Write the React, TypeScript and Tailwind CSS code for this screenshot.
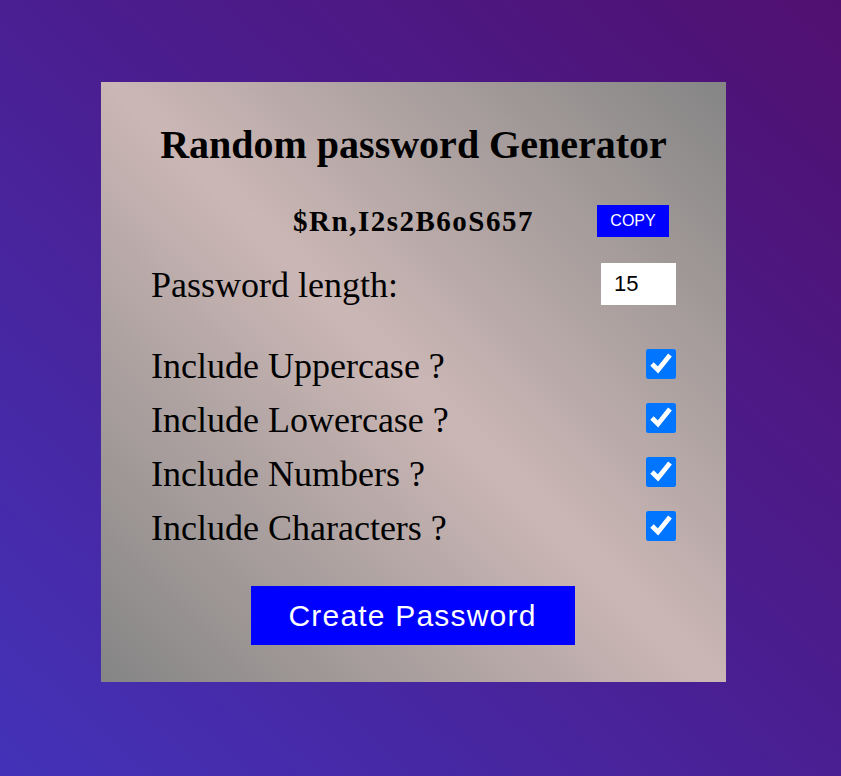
import React from 'react'

const options = [
    'Include Uppercase ?',
    'Include Lowercase ?',
    'Include Numbers ?',
    'Include Characters ?',
]

const App = () => {
    return (
        <div className='min-h-screen w-full pt-[82px] pl-[101px] bg-[linear-gradient(to_top_right,#4332b8,#4a1f92_50%,#501070)]'>

            <div className="w-[625px] h-[600px] pt-[40px] px-[50px] flex flex-col text-black font-['Liberation_Serif',serif] bg-[linear-gradient(45deg,#858585,#cbb7b5_50%,#858585)]">

                <h1 className='text-center text-[40px] leading-[46px] font-bold'>
                    Random password Generator
                </h1>

                <div className='grid grid-cols-[1fr_auto_1fr] items-center mt-[37px] h-[32px]'>
                    <div />
                    <span className='text-[29px] leading-[32px] font-bold tracking-[1.5px]'>
                        $Rn,I2s2B6oS657
                    </span>
                    <button className="justify-self-end mr-[7px] w-[72px] h-[32px] bg-[#0000ff] text-white text-[16px] font-['Liberation_Sans',sans-serif]">
                        COPY
                    </button>
                </div>

                <div className='flex justify-between items-center mt-[26px] h-[42px]'>
                    <label className='text-[36px] leading-[42px] pt-[2px]'>Password length:</label>
                    <input
                        type='number'
                        defaultValue={15}
                        className="w-[75px] h-[42px] bg-white pl-[13px] text-[22px] outline-none font-['Liberation_Sans',sans-serif] [appearance:textfield] [&::-webkit-inner-spin-button]:appearance-none"
                    />
                </div>

                <div className='flex flex-col mt-[32px]'>
                    {options.map((item) => (
                        <div key={item} className='flex justify-between items-center h-[54px]'>
                            <label className='text-[36px] leading-[40px] pt-[3px]'>{item}</label>
                            <input type='checkbox' defaultChecked className='w-[30px] h-[30px] accent-[#0075ff]' />
                        </div>
                    ))}
                </div>

                <div className='flex justify-center mt-[33px] pr-[2px]'>
                    <button className="w-[324px] h-[59px] bg-[#0000ff] text-white text-[30px] tracking-[1.2px] font-['Liberation_Sans',sans-serif]">
                        Create Password
                    </button>
                </div>
            </div>
        </div>
    )
}

export default App
